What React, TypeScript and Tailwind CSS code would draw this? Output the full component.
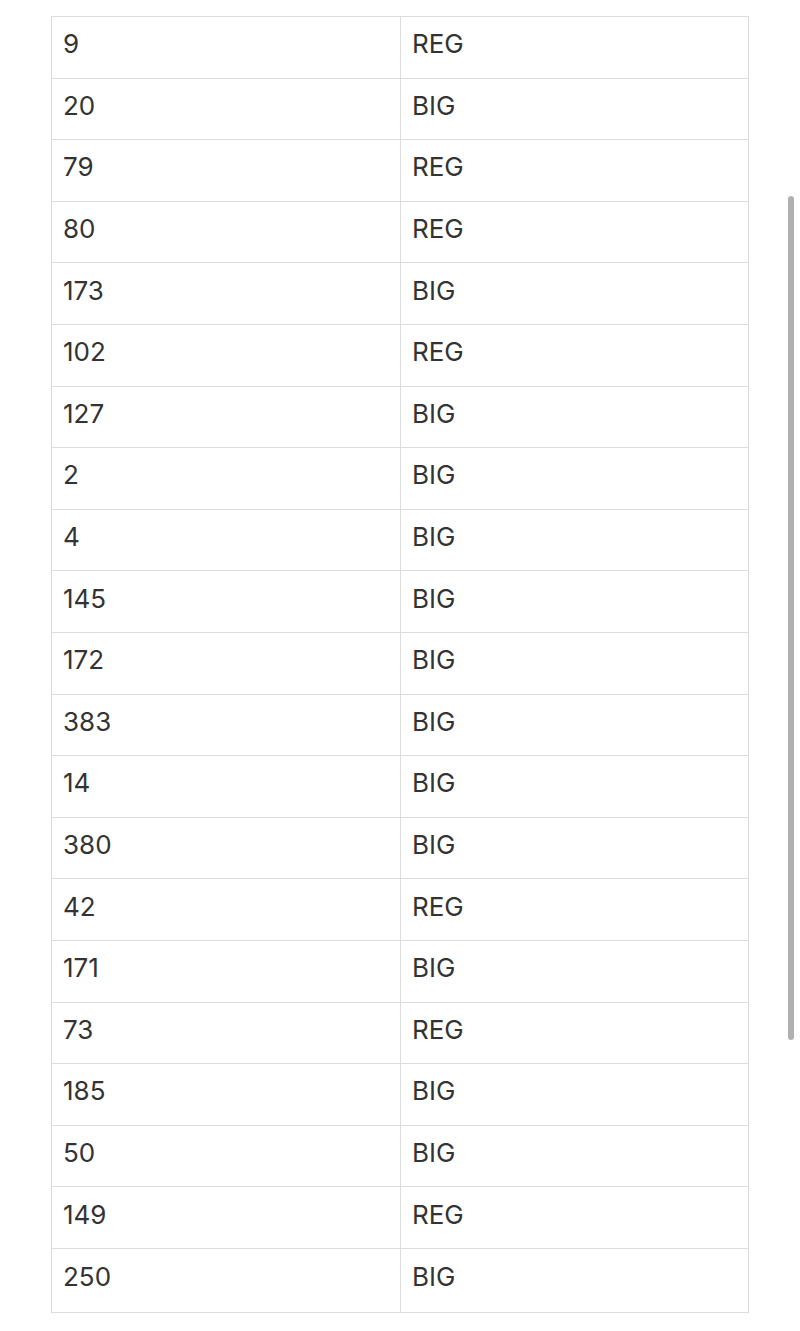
const rows: [string, string][] = [
  ["9", "REG"],
  ["20", "BIG"],
  ["79", "REG"],
  ["80", "REG"],
  ["173", "BIG"],
  ["102", "REG"],
  ["127", "BIG"],
  ["2", "BIG"],
  ["4", "BIG"],
  ["145", "BIG"],
  ["172", "BIG"],
  ["383", "BIG"],
  ["14", "BIG"],
  ["380", "BIG"],
  ["42", "REG"],
  ["171", "BIG"],
  ["73", "REG"],
  ["185", "BIG"],
  ["50", "BIG"],
  ["149", "REG"],
  ["250", "BIG"],
];

export default function App() {
  return (
    <div className="relative w-[800px] h-[1331px] bg-white overflow-hidden font-['Inter','Liberation_Sans',sans-serif]">
      <div className="pt-[16px] pl-[51px]">
        <table className="w-[698px] border-collapse table-fixed text-[26px] text-[#333333]">
          <tbody>
            {rows.map(([num, size], i) => (
              <tr key={i} className={i === rows.length - 1 ? "h-[64px]" : "h-[61.6px]"}>
                <td className="w-[349px] border border-[#dcdcdc] pl-[11px] pb-[6px] align-middle leading-none">
                  {num}
                </td>
                <td className="border border-[#dcdcdc] pl-[11px] pb-[6px] align-middle leading-none">
                  {size}
                </td>
              </tr>
            ))}
          </tbody>
        </table>
      </div>

      {/* scrollbar */}
      <div className="absolute left-[788px] top-[196px] w-[6px] h-[844px] rounded-full bg-[#b0b0b0]" />
    </div>
  );
}
